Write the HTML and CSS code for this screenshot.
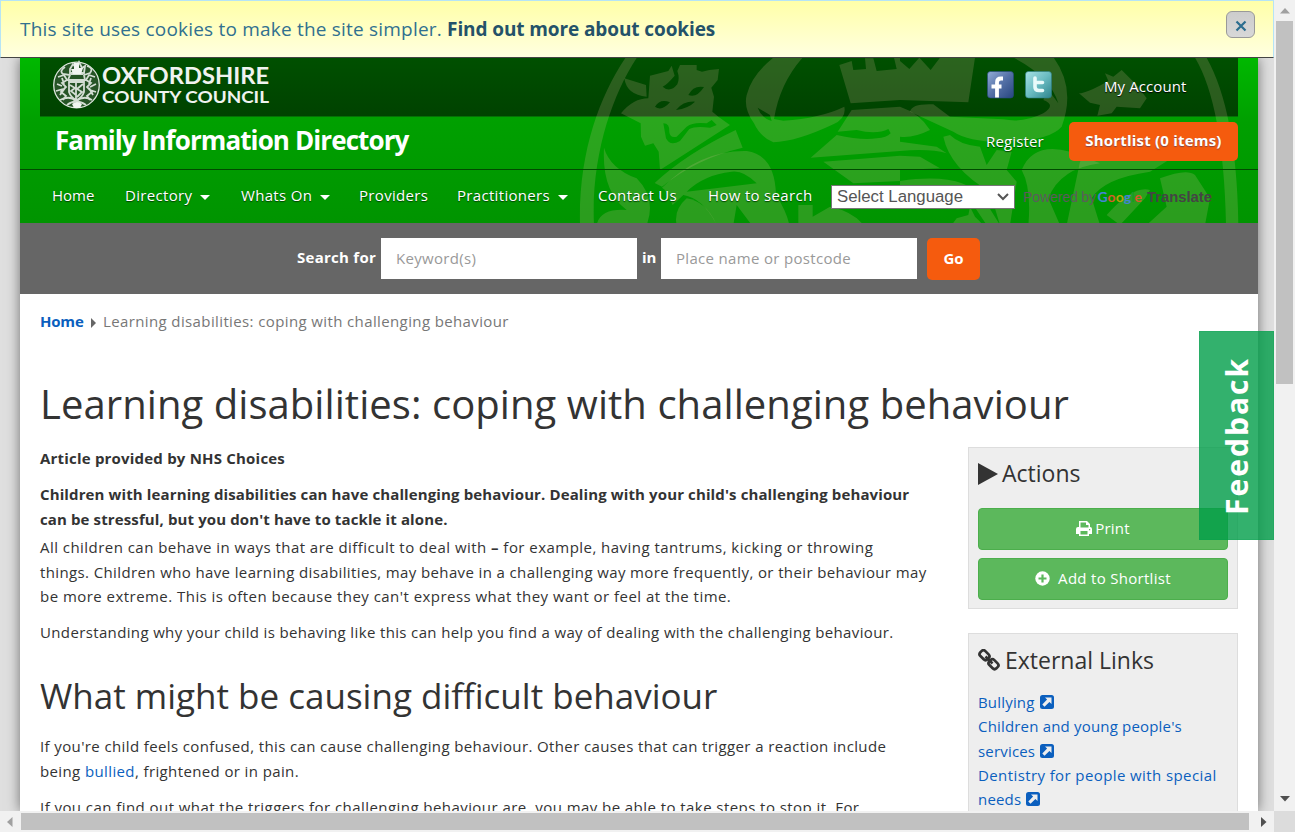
FILE: index.html
```html
<!DOCTYPE html>
<html lang="en">
<head>
<meta charset="utf-8">
<title>Learning disabilities: coping with challenging behaviour</title>
<link rel="stylesheet" href="styles.css">
</head>
<body>
<div class="window">
<div class="viewport">
  <div class="cookie"><p>This site uses cookies to make the site simpler. <b>Find out more about cookies</b></p>
    <button class="close" aria-label="Close"><svg width="12" height="12" viewBox="0 0 12 12"><path d="M1.5 1.5l9 9M10.500 1.500l-9 9" stroke="#2b6d8f" stroke-width="2.200"/></svg></button></div>
  <div class="wrap">
    <header class="header">
      <svg class="crest" width="688" height="165" viewBox="570 58 688 165">
        <g fill="#ffc8b4" fill-opacity=".17">
          <g transform="translate(570 55) scale(.33333)">
            <path d="M172 0C90 120 25 290 30 510H72C62 300 130 110 206 0Z"/>
            <path d="M163 70L228 90 230 125Q170 120 163 70ZM240 62L295 48 305 32 314 62Q290 90 278 95 300 115 322 88 330 70 322 48L330 30H380V45L396 50 418 45 447 42 443 75 424 98 432 125 427 170 445 185 480 210 270 345 266 290 250 265 225 272 213 245 212 205 153 175Q190 130 235 130ZM255 155Q275 170 300 142 270 130 255 155ZM355 120Q380 130 402 96 370 90 355 120ZM318 165Q355 160 375 140 340 138 318 165ZM280 205Q300 205 298 232 300 250 320 245L350 215Q370 200 410 205L425 195 440 210 420 218Q375 212 358 222L330 258Q300 275 288 250Z" fill-rule="evenodd"/>
            <path d="M497 225L518 278Q380 310 276 395L254 384Q350 295 497 225Z"/>
            <path d="M276 398Q390 285 530 288 615 300 618 420 650 470 658 510H545L500 450 490 510H440Q400 430 340 420L308 450 285 405ZM350 410L560 385Q520 345 485 350 400 360 350 410Z" fill-rule="evenodd"/>
            <path d="M102 278Q120 340 200 370 260 430 230 510H80Q90 460 170 465 95 410 102 278Z"/>
            <path d="M575 0H705Q630 80 612 192L640 197Q750 190 823 155 830 190 790 208 680 260 610 262 570 245 552 205 520 160 530 120 545 60 610 8ZM563 158Q575 190 605 198L600 180Z" fill-rule="evenodd"/>
            <path d="M808 30L845 18 850 45 888 42 885 10H910L920 48 980 42 972 8H990V135L842 145Z"/>
            <path d="M722 308L800 240Q875 257 920 250 950 248 962 235L955 222Q920 240 860 225L803 230 845 165 990 155V288Z"/>
            <path d="M760 320L990 302V378L850 385ZM685 450H728V485L780 455Q850 470 880 510H685Z"/>
            <path d="M320 510Q310 465 350 430 410 440 440 510Z"/>
          </g>
          <g transform="translate(900 55) scale(.33333)">
            <path d="M0 18L28 42 58 8 92 45 120 8H225L205 142 0 135Z"/>
            <path d="M325 0H455Q530 95 485 215 445 260 300 260 205 260 160 230L30 170Q35 145 100 148L150 185 310 193Q370 205 430 175 470 150 430 135L445 105 475 145Q450 60 325 0Z"/>
            <path d="M0 155Q60 175 90 225 40 250 0 245ZM0 260L110 275 140 295Q90 280 0 288ZM0 302L60 305 120 340 0 345ZM150 240Q180 270 240 275L260 330 290 285 335 290 320 345 350 380 330 510H300L270 410Q150 340 130 245ZM0 378Q190 350 250 430L300 510H260L200 420 75 395 0 430Z"/>
            <path d="M365 345Q400 260 510 290L600 325Q480 340 445 430L480 510H385Q395 400 365 345Z"/>
            <path d="M537 115Q560 115 625 78L615 55 640 65 665 45 710 90 740 130 720 160 650 155 635 175 592 182 600 150 570 143Z"/>
            <path d="M815 0H880Q970 140 978 510H1015Q1010 160 915 0ZM540 320Q600 250 700 275L800 230 865 260 830 300 750 350Q610 370 575 430L600 510H500ZM780 370Q860 340 885 360L930 430 915 510H740L800 455ZM620 480Q700 390 750 405L735 430 660 510ZM170 490L205 480 210 455 225 485 250 510H155Z"/>
          </g>
        </g>
      </svg>
      <div class="top">
        <svg class="logo" width="217" height="50" viewBox="0 0 217 50">
          <circle cx="23.500" cy="25" r="22.800" fill="#265426" stroke="#dce5dc" stroke-width="1.300"/>
          <g fill="none" stroke="#d3ddd3" stroke-width="1.800">
            <path d="M17 9l3-5 3 4 3-6 3 6 3-2-1 7H17zM18 14h12M12 7q-6 4-2 7l7 1-2 5h17l-1-5 6-2q4-5-3-7" />
            <path d="M5 17l6-2 3 5-5 3 4 4-5 5 5 4-3 4M42 17l-6-2-3 5 5 3-4 4 5 5-5 4 3 4M4 24l5 2M43 24l-6 3M3 31l7-2M43 32l-6-2M9 18l2 6M38 18l-2 6M12 28l-5 7M36 28l4 7"/>
            <path d="M16 22h15v10q-2 6-7.500 8Q18 38 16 32zM17 25l5 3-4 3 5 4M30 24l-6 5 5 3-5 5M23 22v17"/>
            <path d="M7 40q10-5 16 1 8-6 16-1M14 45q9-7 19 0"/>
          </g>
          <path d="M21 3h5v5h4l-2 6h-8l-2-5h3zM19 44q5-4 10 0l-2 4h-6z" fill="#f2f5f2"/>
          <g fill="#f0f3f0" font-family="Lato, sans-serif" font-weight="700">
            <text x="49" y="24" font-size="22" textLength="167" lengthAdjust="spacingAndGlyphs">OXFORDSHIRE</text>
            <text x="49" y="43" font-size="17.500" textLength="167" lengthAdjust="spacingAndGlyphs">COUNTY COUNCIL</text>
          </g>
        </svg>
        <div class="social">
          <svg width="27" height="28" viewBox="0 0 27 28"><defs><linearGradient id="fb" x1="0" y1="0" x2="1" y2="1"><stop stop-color="#93add8"/><stop offset=".5" stop-color="#5470a6"/><stop offset="1" stop-color="#274680"/></linearGradient></defs><rect x=".5" y=".5" width="26" height="26.500" rx="3" fill="url(#fb)" stroke="#274a80" stroke-opacity=".6"/><path d="M16 7.500h-2q-4 0-4 4v15M4.500 15.500H14.500" stroke="#fff" stroke-width="3.800" fill="none"/></svg>
          <svg width="27" height="28" viewBox="0 0 27 28"><defs><linearGradient id="tw" x1="0" y1="0" x2="1" y2="1"><stop stop-color="#a7e0e4"/><stop offset=".5" stop-color="#6bbcc2"/><stop offset="1" stop-color="#2d848d"/></linearGradient></defs><rect x=".5" y=".5" width="26" height="26.500" rx="3" fill="url(#tw)" stroke="#2b7f85" stroke-opacity=".6"/><path d="M10 7v9q0 3.500 4 3.500h3.500M10 11.500h7.500" stroke="#e8fafa" stroke-width="3.600" stroke-linecap="round" fill="none"/></svg>
        </div>
        <a class="account">My Account</a>
      </div>
      <div class="brand"><h2>Family Information Directory</h2><a class="register">Register</a><a class="shortlist">Shortlist (0 items)</a></div>
      <nav class="nav"><a class="home">Home</a><a>Directory<i></i></a><a>Whats On<i></i></a><a>Providers</a><a>Practitioners<i></i></a><a>Contact Us</a><a>How to search</a>
        <span class="select">Select Language<svg width="12" height="8" viewBox="0 0 12 8"><path d="M1 1l5 5 5-5" fill="none" stroke="#555" stroke-width="2"/></svg></span>
        <span class="powered">Powered by <b><em class="gb">G</em><em class="gr">o</em><em class="gy">o</em><em class="gb">g</em><em class="gg">l</em><em class="gr">e</em></b></span><b class="translate">Translate</b></nav>
    </header>
    <form class="search"><label>Search for</label><span class="field">Keyword(s)</span><label class="in">in</label><span class="field place">Place name or postcode</span><span class="go">Go</span></form>
    <div class="crumbs"><b>Home</b><i></i><span>Learning disabilities: coping with challenging behaviour</span></div>
    <h1>Learning disabilities: coping with challenging behaviour</h1>
    <div class="columns">
      <main>
        <p class="strong provided">Article provided by NHS Choices</p>
        <p class="strong intro">Children with learning disabilities can have challenging behaviour. Dealing with your child's challenging behaviour<br>can be stressful, but you don't have to tackle it alone.</p>
        <p class="lead"><span class="wide">All children can behave in ways that are difficult to deal with <b>–</b> for example, having tantrums, kicking or throwing</span><br>things. Children who have learning disabilities, may behave in a challenging way more frequently, or their behaviour may<br><span class="wide">be more extreme. This is often because they can't express what they want or feel at the time.</span></p>
        <p class="why">Understanding why your child is behaving like this can help you find a way of dealing with the challenging behaviour.</p>
        <h2>What might be causing difficult behaviour</h2>
        <p>If you're child feels confused, this can cause challenging behaviour. Other causes that can trigger a reaction include<br>being <a>bullied</a>, frightened or in pain.</p>
        <p class="wide last">If you can find out what the triggers for challenging behaviour are, you may be able to take steps to stop it. For</p>
      </main>
      <aside>
        <section class="panel actions"><h3><svg width="20" height="22" viewBox="0 0 20 22"><path d="M0 0l20 11L0 22z" fill="#333"/></svg>Actions</h3>
          <a class="btn"><svg width="16" height="15" viewBox="0 0 16 15"><path fill="#fff" fill-rule="evenodd" d="M3 0h8l3 3v3q2 0 2 2v5h-3v2H3v-2H0V8q0-2 2-2h1zM4.500 1.500v5h8V4H10V1.500zM4.500 10v3.500h7V10zM13 8v1.200h1.200V8z"/></svg>Print</a>
          <a class="btn add"><svg width="15" height="15" viewBox="0 0 15 15"><circle cx="7.500" cy="7.500" r="7.200" fill="#fff"/><path d="M7.500 3.500v8M3.500 7.500h8" stroke="#5cb85c" stroke-width="2.200"/></svg>Add to Shortlist</a>
        </section>
        <section class="panel"><h3><svg class="chain" width="22" height="22" viewBox="0 0 22 22"><g fill="none" stroke="#333" stroke-width="2.700"><rect x="1.500" y="2.700" width="10" height="7" rx="2.700" transform="rotate(45 6.500 6.200)"/><rect x="10.500" y="11.700" width="10" height="7" rx="2.700" transform="rotate(45 15.500 15.200)"/><path d="M7.500 7.500l7 7"/></g></svg>External Links</h3>
          <p class="links">Bullying <svg width="14" height="14" viewBox="0 0 14 14"><rect width="14" height="14" rx="2.500" fill="#0b5fbe"/><path d="M5 2.500h6.500V9L9.400 6.900l-4.900 4.800-2.200-2.200 4.800-4.900z" fill="#eee"/></svg><br>Children and young people's<br>services <svg width="14" height="14" viewBox="0 0 14 14"><rect width="14" height="14" rx="2.500" fill="#0b5fbe"/><path d="M5 2.500h6.500V9L9.400 6.900l-4.900 4.800-2.200-2.200 4.800-4.900z" fill="#eee"/></svg><br><span class="wide">Dentistry for people with special</span><br>needs <svg width="14" height="14" viewBox="0 0 14 14"><rect width="14" height="14" rx="2.500" fill="#0b5fbe"/><path d="M5 2.500h6.500V9L9.400 6.900l-4.900 4.800-2.200-2.200 4.800-4.900z" fill="#eee"/></svg></p>
        </section>
      </aside>
    </div>
  </div>
  <div class="feedback"><span>Feedback</span></div>
</div>
<div class="vbar"><svg width="10" height="6" viewBox="0 0 10 6"><path d="M0 5.500L5 0l5 5.500z" fill="#a0a0a0"/></svg><div></div><svg width="10" height="6" viewBox="0 0 10 6"><path d="M0 0l5 5.500L10 0z" fill="#505050"/></svg></div>
<div class="hbar"><svg width="6" height="10" viewBox="0 0 6 10"><path d="M5.500 0L0 5l5.500 5z" fill="#a0a0a0"/></svg><div></div><svg width="6" height="10" viewBox="0 0 6 10"><path d="M0 0l5.500 5L0 10z" fill="#505050"/></svg></div>
<div class="corner"></div>
</div>
</body>
</html>
```
FILE: styles.css
```css
* { box-sizing: border-box; }
body { margin: 0; overflow: hidden; font: 15px/24.6px "Open Sans", sans-serif; color: #333; }
p, h1, h2, h3 { margin: 0; font-weight: 400; white-space: nowrap; }
svg { flex: none; }
.window { display: grid; grid-template: 811px 21px / 1274px 21px; width: 1295px; height: 832px; }
.viewport { position: relative; overflow: hidden; background: #dfdfdf; }

.cookie { position: relative; z-index: 2; height: 58px; padding: 0 18px 0 19px; display: flex; justify-content: space-between; border: 1px solid #b6e4f5; border-bottom-color: #444; background: linear-gradient(#ffffa8, #ffffe0); color: #31708f; font-size: 19px; line-height: 56px; letter-spacing: .2px; }
.cookie b { color: #245269; letter-spacing: -.1px; }
.close { margin-top: 10px; width: 29px; height: 27px; padding: 3px 0 0; border: 1px solid #999; border-radius: 6px; background: linear-gradient(#ccc, #d8d8d8); line-height: 0; }

.wrap { width: 1238px; margin: 0 auto 0 20px; height: 753px; background: #fff; box-shadow: 0 0 12px rgba(0,0,0,.5); }
.header { position: relative; height: 165px; background: linear-gradient(#00b800, #00a000 38%, #009400); color: #fff; font-weight: 500; }
.crest { position: absolute; right: 0; top: 0; }
.top > *, .brand, .nav { position: relative; }
.top { margin: 0 20px; height: 59px; padding-left: 13px; display: flex; background: linear-gradient(#005000, #004200); border-bottom: 1px solid #067006; }
.logo { margin-top: 2px; }
.social { display: flex; gap: 11px; margin: 13px 0 0 717px; }
.account { margin: 16px 0 0 52px; letter-spacing: .1px; text-shadow: 0 1px 1px #000; }
.brand { height: 53px; display: flex; padding: 5px 20px 0 35px; border-bottom: 1px solid #004a00; }
.brand h2 { width: 931px; font-size: 26px; font-weight: 700; line-height: 36px; letter-spacing: -.9px; }
.register { width: 83px; padding-top: 7px; letter-spacing: .15px; text-shadow: 0 1px 1px #040; }
.shortlist { width: 169px; height: 39px; border-radius: 5px; background: #f55b0e; font-weight: 700; line-height: 36px; text-align: center; letter-spacing: .2px; text-shadow: 0 1px 1px #844; }
.nav { display: grid; grid-template-columns: 73px 116px 118px 98px 141px 110px 123px 192px 124px 80px; padding: 0 0 2px 32px; height: 53px; align-items: center; white-space: nowrap; letter-spacing: .32px; text-shadow: 0 1px 1px #040; }
.home { letter-spacing: 0; }
.nav i { display: inline-block; margin-left: 8px; vertical-align: 1px; border: 5px solid transparent; border-top-color: #fff; border-bottom: 0; }
.select { display: flex; justify-content: space-between; align-items: center; width: 184px; height: 24px; padding: 0 5px; margin-top: 2px; border: 1px solid #767676; background: #fff; color: #555; font: 16.800px "Liberation Sans", sans-serif; letter-spacing: 0; text-shadow: none; }
.powered { display: flex; justify-content: space-between; align-items: center; width: 119px; margin-top: 2px; color: #5c5c5c; font: 14.200px "Liberation Sans", sans-serif; letter-spacing: -.2px; text-shadow: none; }
.powered b { font-size: 14px; font-family: Lato, sans-serif; letter-spacing: 0; }
.powered em { font-style: normal; }
.gb { color: #4285d4; } .gr { color: #d9592b; } .gy { color: #b9a00c; } .gg { color: #169c28; }
.translate { margin-top: 2px; color: #444; font: bold 14.800px "Liberation Sans", sans-serif; letter-spacing: 0; text-shadow: none; }

.search { height: 71px; padding: 15px 0 0 277px; display: flex; background: #666; color: #fff; font-weight: 700; line-height: 39px; }
.search label { width: 84px; letter-spacing: .27px; white-space: nowrap; }
.search .in { width: 24px; padding-left: 5px; letter-spacing: 0; }
.field { width: 256px; height: 41px; padding: 1px 15px 0; background: #fff; color: #999; font-weight: 400; letter-spacing: .32px; }
.go { width: 53px; height: 42px; margin-left: 10px; border-radius: 5px; background: #f55b0e; text-align: center; line-height: 41px; }

.crumbs { height: 62px; padding: 15px 20px 0; display: flex; color: #777; letter-spacing: .38px; }
.crumbs b { width: 51px; color: #0b5fbe; letter-spacing: -.2px; }
.crumbs i { width: 12px; height: 9px; margin-top: 9px; }
.crumbs i::before { content: ""; display: block; width: 0; border: 5px solid transparent; border-left-color: #666; border-right: 0; }
h1 { padding: 22px 20px 0; height: 91px; font-size: 40px; line-height: 52px; letter-spacing: .06px; }
.columns { display: flex; justify-content: space-between; padding: 0 20px; }
main { width: 900px; margin-top: -1px; letter-spacing: .38px; }
main p { margin-bottom: 11.500px; }
main .lead { margin-bottom: 10.500px; }
.strong { font-weight: 700; letter-spacing: .12px; }
.provided { letter-spacing: .2px; }
main .intro { margin-bottom: 4px; }
.wide { letter-spacing: .46px; }
.why { letter-spacing: .36px; }
.last { letter-spacing: .44px; }
main a { color: #0b5fbe; }
main h2 { font-size: 35px; line-height: 48px; margin: 28px 0 14px; letter-spacing: 0; }
aside { width: 270px; }
.panel { height: 162px; margin-bottom: 24px; padding: 8px 9px; border: 1px solid #ddd; background: #eee; }
.panel + .panel { height: 300px; }
.panel h3 { display: flex; align-items: center; gap: 5px; height: 36px; font-size: 23px; }
.actions h3 { height: 35px; gap: 4px; margin-bottom: 17px; }
.btn { display: flex; align-items: center; justify-content: center; gap: 3px; height: 42px; margin-bottom: 8px; padding-bottom: 2px; border: 1px solid #4cae4c; border-radius: 4px; background: #5cb85c; color: #fff; font-weight: 500; letter-spacing: .2px; }
.add { gap: 8px; letter-spacing: .3px; }
.links { margin-top: 12px; line-height: 24.300px; color: #0b5fbe; letter-spacing: .18px; }
.links .wide { letter-spacing: .4px; }
.links svg { margin-left: 1px; vertical-align: -1px; }
.feedback { position: absolute; left: 1199px; top: 331px; width: 75px; height: 209px; background: rgba(0,158,73,.8); border: 1px solid rgba(0,158,73,.2); color: #fff; }
.feedback span { writing-mode: vertical-rl; transform: rotate(180deg); display: block; width: 73px; height: 207px; line-height: 73px; font-size: 30px; font-weight: 700; letter-spacing: 2px; text-align: center; }

.vbar { display: flex; flex-direction: column; align-items: center; background: #f1f1f1; padding-top: 8px; }
.vbar div { width: 17px; height: 363px; margin: 7px 0 412px; background: #c1c1c1; }
.hbar { display: flex; align-items: center; background: #f1f1f1; padding-left: 7px; }
.hbar div { width: 1228px; height: 17px; margin: 0 12px 0 8px; background: #c1c1c1; }
.corner { background: #dcdcdc; }
```
